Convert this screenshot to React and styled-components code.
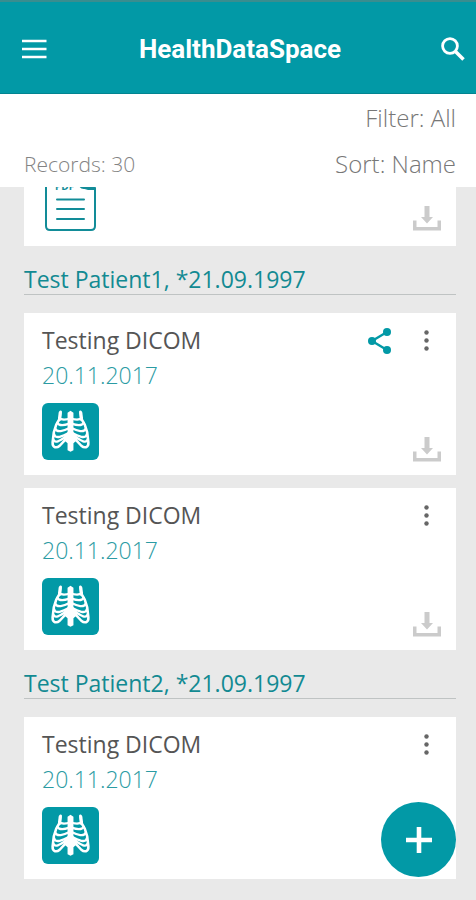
import React from 'react';
import styled, { createGlobalStyle } from 'styled-components';

const GlobalStyle = createGlobalStyle`
  * {
    box-sizing: border-box;
  }

  body {
    margin: 0;
    background-color: #e9e9e9;
    font-family: 'Open Sans', 'Noto Sans', sans-serif;
  }

  h1, h2, h3, p {
    margin: 0;
  }
`

const AppContainer = styled.div`
  min-height: 100vh;
  display: flex;
  flex-direction: column;
`

const Header = styled.header`
  background-color: #0299a6;
  border-top: 2px solid #3a8d8f;
  border-bottom: 1px solid #028490;
  padding: 29px 11px 26px 22px;
  display: flex;
  align-items: center;
  justify-content: space-between;
`

const Title = styled.h1`
  color: #ffffff;
  font-family: Roboto, sans-serif;
  font-size: 26px;
  font-weight: 700;
  line-height: 36px;
`

const IconButton = styled.button`
  background: none;
  border: none;
  padding: 0;
  display: flex;
  cursor: pointer;
`

const SearchButton = styled(IconButton)`
  padding-left: 8px;
`

const Toolbar = styled.section`
  background-color: #ffffff;
  padding: 1px 20px 0 24px;
  display: flex;
  align-items: flex-end;
  justify-content: space-between;
`

const Records = styled.p`
  color: #838383;
  font-size: 21px;
  font-weight: 300;
  line-height: 46px;
`

const Options = styled.div`
  display: flex;
  flex-direction: column;
  align-items: flex-end;
`

const OptionButton = styled.button`
  background: none;
  border: none;
  padding: 0;
  color: #777777;
  font-family: inherit;
  font-size: 24px;
  font-weight: 300;
  line-height: 46px;
  cursor: pointer;
`

const List = styled.main`
  flex-grow: 1;
  padding: 0 20px 20px 24px;
`

const Cards = styled.div`
  display: flex;
  flex-direction: column;
  gap: 13px;
`

const Card = styled.article`
  background-color: #ffffff;
  padding: 10px 15px 13px 18px;
  display: flex;
  justify-content: space-between;
`

const CutCard = styled(Card)`
  height: 59px;
  padding-top: 0;
  padding-bottom: 15px;
  align-items: flex-end;
  overflow: hidden;
`

const PatientName = styled.h2`
  color: #128a92;
  border-bottom: 1px solid #bfc3c3;
  margin-bottom: 18px;
  padding-top: 18px;
  font-size: 23px;
  font-weight: 400;
  line-height: 30px;
`

const RecordTitle = styled.h3`
  color: #555555;
  font-size: 23px;
  font-weight: 400;
  line-height: 35px;
`

const RecordDate = styled.p`
  color: #2b9ba3;
  font-size: 23px;
  font-weight: 300;
  line-height: 35px;
  margin-bottom: 10px;
`

const Thumb = styled.div`
  background-color: #0299a6;
  border-radius: 6px;
  width: 57px;
  height: 57px;
  margin-bottom: 2px;
`

const Side = styled.div`
  display: flex;
  flex-direction: column;
  align-items: flex-end;
  justify-content: space-between;
`

const Actions = styled.div`
  display: flex;
  align-items: center;
  gap: 21px;
  padding-top: 5px;
`

const AddButton = styled.button`
  position: fixed;
  right: 20px;
  bottom: 23px;
  width: 75px;
  height: 75px;
  padding: 0;
  border: none;
  border-radius: 50%;
  background-color: #0299a6;
  display: flex;
  align-items: center;
  justify-content: center;
  cursor: pointer;
`

const MenuIcon = () => (
  <svg width="25" height="20" viewBox="0 0 25 20" stroke="#fff" strokeWidth="2.6">
    <path d="M0 2H24.500M0 10H24.500M0 18H24.500" />
  </svg>
)

const SearchIcon = () => (
  <svg width="24" height="24" viewBox="0 0 24 24" fill="none" stroke="#fff">
    <circle cx="9" cy="9" r="7.400" strokeWidth="2.800" />
    <path d="M14 14L22.500 22.500" strokeWidth="3.600" />
  </svg>
)

const ShareIcon = () => (
  <svg width="24" height="26" viewBox="0 0 24 26" fill="#0299a6">
    <path d="M19 4L4 13L19 22" fill="none" stroke="#0299a6" strokeWidth="2.400" />
    <circle cx="19" cy="4" r="4" />
    <circle cx="4" cy="13" r="4" />
    <circle cx="19" cy="22" r="4" />
  </svg>
)

const MoreIcon = () => (
  <svg width="28" height="26" viewBox="0 0 28 26" fill="#666">
    <circle cx="13.500" cy="4.500" r="2.200" />
    <circle cx="13.500" cy="12.500" r="2.200" />
    <circle cx="13.500" cy="20.500" r="2.200" />
  </svg>
)

const DownloadIcon = () => (
  <svg width="28" height="26" viewBox="0 0 28 26" fill="#cbcbcb">
    <path d="M11.500 1H16.500V12H20L14 18.500L8 12H11.500Z" />
    <path d="M0 15.500H3.500V22H24.500V15.500H28V25.500H0Z" />
  </svg>
)

const RibsIcon = () => (
  <svg width="57" height="57" viewBox="0 0 58 58" fill="none" stroke="#fff" strokeLinecap="round" strokeLinejoin="round">
    <path d="M26 10L29 8L32 10V30L35.500 33V38L32 41V48L29 49.500L26 48V41L22.500 38V33L26 30Z" fill="#fff" stroke="none" />
    {['', 'translate(58 0) scale(-1 1)'].map((side) => (
      <g key={side} transform={side}>
        <path d="M19 9L18 16L14.500 22L12 30L10.800 40C10.500 46 15 46 18 43.500L25 36" strokeWidth="2.600" />
        <path d="M18.500 10L17.800 17" strokeWidth="3.200" />
        <path d="M17.500 15C20 18 24 17 28 16" strokeWidth="2.100" />
        <path d="M15.500 20C17.500 24 23 22.500 28 21" strokeWidth="2.200" />
        <path d="M13.500 26C15 30.500 22 28.500 28 25.500" strokeWidth="2.300" />
        <path d="M12.500 32C13.500 37 21 34 28 30" strokeWidth="2.400" />
        <path d="M11.800 37.500C13.500 42 20 37 26 33.500" strokeWidth="2.400" />
      </g>
    ))}
  </svg>
)

const PdfIcon = () => (
  <svg width="58" height="64" viewBox="0 0 58 64" fill="none" stroke="#128c98" strokeWidth="2">
    <path d="M38 2H9Q4 2 4 7V59Q4 63 8 63H49Q53 63 53 59V21L38 2V17Q38 21 42 21H53" />
    <path d="M38 19H53V23H46Q40 22 38 19Z" fill="#128c98" stroke="none" />
    <path d="M15 32.500H42M15 42H42M15 52H42" strokeLinecap="round" />
    <text x="13" y="23" fill="#128c98" stroke="none" fontFamily="Open Sans" fontSize="10" fontWeight="700">PDF</text>
  </svg>
)

const Record = ({ record }) => (
  <Card>
    <div>
      <RecordTitle>{record.title}</RecordTitle>
      <RecordDate>{record.date}</RecordDate>
      <Thumb><RibsIcon /></Thumb>
    </div>
    <Side>
      <Actions>
        {record.shared && <IconButton aria-label="Share"><ShareIcon /></IconButton>}
        <IconButton aria-label="More"><MoreIcon /></IconButton>
      </Actions>
      {record.download && <IconButton aria-label="Download"><DownloadIcon /></IconButton>}
    </Side>
  </Card>
)

class App extends React.Component {
  state = {
    patients: [
      {
        name: 'Test Patient1, *21.09.1997',
        records: [
          { id: 1, title: 'Testing DICOM', date: '20.11.2017', shared: true, download: true },
          { id: 2, title: 'Testing DICOM', date: '20.11.2017', shared: false, download: true }
        ]
      },
      {
        name: 'Test Patient2, *21.09.1997',
        records: [
          { id: 3, title: 'Testing DICOM', date: '20.11.2017', shared: false, download: false }
        ]
      }
    ]
  }

  render() {
    return (
      <AppContainer>
        <GlobalStyle />
        <Header>
          <IconButton aria-label="Menu"><MenuIcon /></IconButton>
          <Title>HealthDataSpace</Title>
          <SearchButton aria-label="Search"><SearchIcon /></SearchButton>
        </Header>
        <Toolbar>
          <Records>Records: 30</Records>
          <Options>
            <OptionButton>Filter: All</OptionButton>
            <OptionButton>Sort: Name</OptionButton>
          </Options>
        </Toolbar>
        <List>
          <CutCard>
            <PdfIcon />
            <IconButton aria-label="Download"><DownloadIcon /></IconButton>
          </CutCard>
          {this.state.patients.map((patient) => (
            <section key={patient.name}>
              <PatientName>{patient.name}</PatientName>
              <Cards>
                {patient.records.map((record) => <Record key={record.id} record={record} />)}
              </Cards>
            </section>
          ))}
        </List>
        <AddButton aria-label="Add record">
          <svg width="26" height="26" viewBox="0 0 26 26" stroke="#fff" strokeWidth="4.600">
            <path d="M13 0V26M0 13H26" />
          </svg>
        </AddButton>
      </AppContainer>
    );
  }
}

export default App;
